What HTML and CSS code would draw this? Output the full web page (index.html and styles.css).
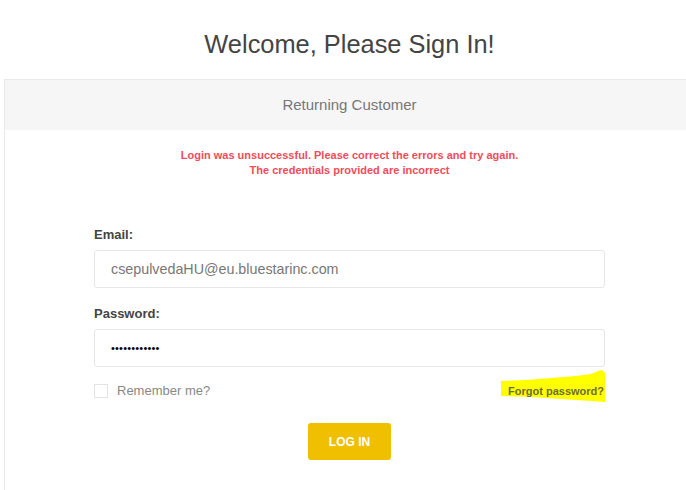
FILE: index.html
```html
<!DOCTYPE html>
<html lang="en">
<head>
    <meta charset="UTF-8">
    <meta name="viewport" content="width=device-width, initial-scale=1.0">
    <title>Login</title>
    <link rel="stylesheet" href="styles.css">
</head>
<body>
    <h1 class="page-title">Welcome, Please Sign In!</h1>

    <div class="customer-block">
        <div class="block-title">Returning Customer</div>

        <div class="message-error">
            Login was unsuccessful. Please correct the errors and try again.<br>
            The credentials provided are incorrect
        </div>

        <form class="login-form" onsubmit="return false">
            <div class="field">
                <label for="Email">Email:</label>
                <input type="text" id="Email" value="csepulvedaHU@eu.bluestarinc.com">
            </div>
            <div class="field">
                <label for="Password">Password:</label>
                <input type="password" id="Password" value="xxxxxxxxxxxx">
            </div>
            <div class="remember-row">
                <label class="remember">
                    <input type="checkbox" class="check">
                    <span>Remember me?</span>
                </label>
                <span class="forgot">
                    <svg class="marker" viewBox="0 0 104 32" preserveAspectRatio="none">
                        <polygon points="0,11 25,10 50,8 75,6 90,4 97,1 101,0 104,3 104,32 90,31 60,29 30,27 0,26" fill="#ffff00"/>
                    </svg>
                    <a href="#">Forgot password?</a>
                </span>
            </div>
            <div class="buttons">
                <button type="submit" class="login-button">LOG IN</button>
            </div>
        </form>
    </div>
</body>
</html>
```

FILE: styles.css
```css
body {
    margin: 0;
    font-family: "Liberation Sans", Arial, sans-serif;
    color: #444;
    background-color: #fff;
    overflow: hidden;
}
.page-title {
    margin: 0;
    padding: 29px 0 20px;
    width: 699px;
    text-align: center;
    font-size: 25.4px;
    font-weight: normal;
    line-height: 30px;
    color: #444;
}
.customer-block {
    margin-left: 4px;
    width: 691px;
    height: 420px;
    border: 1px solid #e9e9e9;
    box-sizing: border-box;
}
.block-title {
    height: 50px;
    line-height: 50px;
    background-color: #f6f6f6;
    text-align: center;
    font-size: 15px;
    color: #777;
}
.message-error {
    margin-top: 18px;
    text-align: center;
    font-size: 11px;
    font-weight: bold;
    line-height: 15px;
    color: #f04c5a;
}
.login-form {
    width: 511px;
    margin: 49px auto 0;
}
.field label {
    display: block;
    font-size: 13px;
    font-weight: bold;
    color: #444;
    line-height: 16px;
    margin-bottom: 7px;
}
.field input {
    display: block;
    width: 100%;
    height: 38px;
    box-sizing: border-box;
    border: 1px solid #e6e6e6;
    border-radius: 3px;
    padding: 0 16px;
    font-family: "Liberation Sans", Arial, sans-serif;
    font-size: 14.3px;
    color: #777;
    outline: none;
}
.field {
    margin-bottom: 18px;
}
.field + .field {
    margin-bottom: 16px;
}
#Password {
    color: #000;
    font-size: 11px;
    letter-spacing: 0.2px;
}
.remember-row {
    display: flex;
    justify-content: space-between;
    align-items: center;
    height: 15px;
}
.remember {
    display: flex;
    align-items: center;
    font-size: 13px;
    color: #888;
}
.check {
    appearance: none;
    width: 14px;
    height: 14px;
    margin: 0 9px 0 0;
    border: 1px solid #e3e3e3;
    box-sizing: border-box;
    background: #fff;
}
.forgot {
    position: relative;
    padding-right: 1px;
    line-height: 13px;
}
.marker {
    position: absolute;
    left: -7px;
    top: -13px;
    width: 104px;
    height: 32px;
}
.forgot a {
    position: relative;
    font-size: 11px;
    font-weight: bold;
    color: #6d6d3c;
    text-decoration: none;
}
.buttons {
    text-align: center;
    margin-top: 25px;
}
.login-button {
    width: 83px;
    height: 37px;
    border: none;
    border-radius: 3px;
    background-color: #f0c000;
    color: #fff;
    font-family: "Liberation Sans", Arial, sans-serif;
    font-size: 12px;
    font-weight: bold;
    cursor: pointer;
}
```
